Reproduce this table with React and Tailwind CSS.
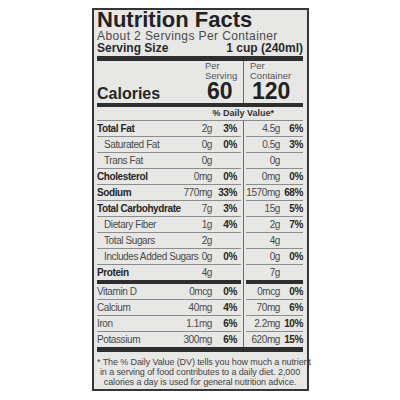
const nutrients = [
  { label: "Total Fat", bold: true, amt: "2g", pct: "3%", ramt: "4.5g", rpct: "6%" },
  { label: "Saturated Fat", indent: true, amt: "0g", pct: "0%", ramt: "0.5g", rpct: "3%" },
  { label: "Trans Fat", indent: true, amt: "0g", pct: "", ramt: "0g", rpct: "" },
  { label: "Cholesterol", bold: true, amt: "0mg", pct: "0%", ramt: "0mg", rpct: "0%" },
  { label: "Sodium", bold: true, amt: "770mg", pct: "33%", ramt: "1570mg", rpct: "68%" },
  { label: "Total Carbohydrate", bold: true, amt: "7g", pct: "3%", ramt: "15g", rpct: "5%" },
  { label: "Dietary Fiber", indent: true, amt: "1g", pct: "4%", ramt: "2g", rpct: "7%" },
  { label: "Total Sugars", indent: true, amt: "2g", pct: "", ramt: "4g", rpct: "" },
  { label: "Includes Added Sugars", indent: true, amt: "0g", pct: "0%", ramt: "0g", rpct: "0%" },
  { label: "Protein", bold: true, amt: "4g", pct: "", ramt: "7g", rpct: "", last: true },
];

const minerals = [
  { label: "Vitamin D", amt: "0mcg", pct: "0%", ramt: "0mcg", rpct: "0%" },
  { label: "Calcium", amt: "40mg", pct: "4%", ramt: "70mg", rpct: "6%" },
  { label: "Iron", amt: "1.1mg", pct: "6%", ramt: "2.2mg", rpct: "10%" },
  { label: "Potassium", amt: "300mg", pct: "6%", ramt: "620mg", rpct: "15%", last: true },
];

function Divider() {
  return (
    <div className="w-[5px] flex justify-center">
      <div className="w-px bg-[#6a6a6a]" />
    </div>
  );
}

function Row({ row }) {
  const line = row.last ? "h-[15px]" : "h-[16px] border-b border-[#8c8c8c]";
  return (
    <div className="flex text-[10px] leading-[15px] tracking-[-0.4px]">
      <div className={`w-[144px] flex pr-[4px] ${line}`}>
        <span
          className={`flex-1 whitespace-nowrap ${
            row.bold ? "font-bold text-[#262626]" : "text-[#4a4a4a]"
          } ${row.indent ? "pl-[7px]" : ""}`}
        >
          {row.label}
        </span>
        <span className="text-[#4a4a4a] whitespace-nowrap">{row.amt}</span>
        <span className="w-[25px] text-right font-bold text-[#262626]">{row.pct}</span>
      </div>
      <Divider />
      <div className={`flex-1 flex ${line}`}>
        <span className="flex-1 text-right text-[#4a4a4a] whitespace-nowrap">{row.ramt}</span>
        <span className="w-[23px] text-right font-bold text-[#262626]">{row.rpct}</span>
      </div>
    </div>
  );
}

export default function App() {
  return (
    <div className="w-[400px] h-[400px] bg-white pt-[8px] pl-[92px]" style={{ fontFamily: '"Liberation Sans", Arial, sans-serif' }}>
      <div className="w-[217px] h-[383px] border-2 border-[#363636] bg-[#e7e7e5] pl-[3px] pr-[4px] flex flex-col text-[#2a2a2a]">
        <div className="text-[22px] leading-[20px] font-extrabold text-[#222] whitespace-nowrap">Nutrition Facts</div>
        <div className="text-[12px] leading-[12px] tracking-[0.4px] text-[#4a4a4a] whitespace-nowrap">About 2 Servings Per Container</div>
        <div className="flex justify-between text-[12px] leading-[13px] font-bold text-[#2a2a2a]">
          <span>Serving Size</span>
          <span>1 cup (240ml)</span>
        </div>
        <div className="mt-[1px] h-[5px] bg-[#2e2e2e]" />

        <div className="flex h-[42px]">
          <div className="w-[144px] flex items-end pb-[1px]">
            <span className="flex-1 text-[16px] leading-[16px] font-bold text-[#262626]">Calories</span>
            <div className="w-[34px] mr-[2px] self-stretch flex flex-col">
              <span className="text-[9.5px] leading-[9.5px] text-[#555]">Per</span>
              <span className="text-[9.5px] leading-[9.5px] text-[#555]">Serving</span>
              <span className="text-[23px] leading-[23px] font-bold text-[#222] pl-[2px]">60</span>
            </div>
          </div>
          <Divider />
          <div className="flex-1 flex flex-col pl-[4px]">
            <span className="text-[9.5px] leading-[9.5px] text-[#555]">Per</span>
            <span className="text-[9.5px] leading-[9.5px] text-[#555]">Container</span>
            <span className="text-[23px] leading-[23px] font-bold text-[#222] pl-[2px]">120</span>
          </div>
        </div>

        <div className="h-[4px] bg-[#2e2e2e]" />
        <div className="h-[14px] border-b border-[#8c8c8c] flex justify-end pr-[29px] text-[9px] leading-[13px] font-bold text-[#333]">
          % Daily Value*
        </div>

        {nutrients.map((r) => (
          <Row key={r.label} row={r} />
        ))}

        <div className="flex h-[4px]">
          <div className="w-[144px] bg-[#2e2e2e]" />
          <Divider />
          <div className="flex-1 bg-[#2e2e2e]" />
        </div>

        {minerals.map((r) => (
          <Row key={r.label} row={r} />
        ))}

        <div className="h-[5px] bg-[#2e2e2e]" />
        <p className="pt-[5px] text-center text-[9px] leading-[10px] text-[#444] whitespace-nowrap tracking-[-0.1px]">
          * The % Daily Value (DV) tells you how much a nutrient
          <br />
          in a serving of food contributes to a daily diet. 2,000
          <br />
          calories a day is used for general nutrition advice.
        </p>
      </div>
    </div>
  );
}
